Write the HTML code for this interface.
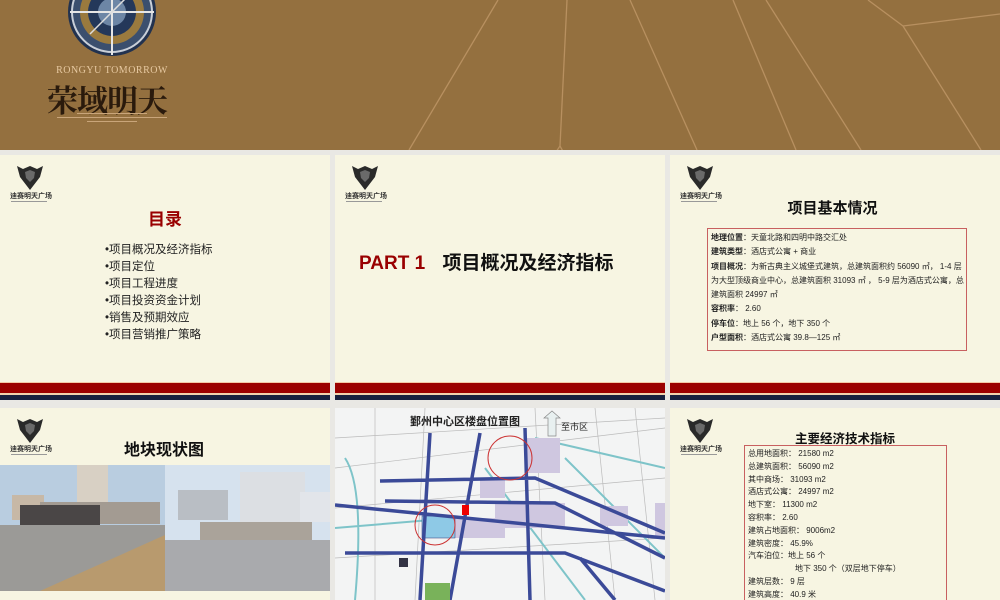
<!DOCTYPE html>
<html><head><meta charset="utf-8">
<style>
*{margin:0;padding:0;box-sizing:border-box}
body{width:1000px;height:600px;overflow:hidden;background:#e9e8e4;position:relative;font-family:"Liberation Sans","Noto Sans CJK SC",sans-serif}
.banner{position:absolute;left:0;top:0;width:1000px;height:150px;background:#94703f;overflow:hidden}
.slide{position:absolute;background:#f7f5e2;overflow:hidden}
.logo{position:absolute;left:16px;top:8px;width:28px;height:28px}
.lt{position:absolute;left:10px;top:36px;font-size:7px;font-weight:bold;color:#333;white-space:nowrap}
.lt2{position:absolute;left:11px;top:46px;width:36px;height:1px;background:#999}
.bars{position:absolute;left:0;width:100%}
.ab{position:absolute}
</style></head><body>

<div class="banner">
<svg width="1000" height="150" style="position:absolute;left:0;top:0">
<g stroke="#b89060" stroke-width="1.3" fill="none">
<line x1="498" y1="0" x2="409" y2="150"/>
<line x1="567" y1="0" x2="560" y2="146"/>
<line x1="560" y1="146" x2="554" y2="155"/>
<line x1="560" y1="146" x2="565" y2="155"/>
<line x1="630" y1="0" x2="697" y2="150"/>
<line x1="733" y1="0" x2="796" y2="150"/>
<line x1="766" y1="0" x2="861" y2="150"/>
<line x1="868" y1="0" x2="903" y2="26"/>
<line x1="903" y1="26" x2="1000" y2="14"/>
<line x1="903" y1="26" x2="981" y2="150"/>
</g>
<circle cx="112" cy="12" r="44" fill="#22324f"/>
<circle cx="112" cy="12" r="40" fill="#3b4f6e" stroke="#c9cfd8" stroke-width="2"/>
<circle cx="112" cy="12" r="32" fill="#9a7a3e"/>
<circle cx="112" cy="12" r="24" fill="#24385a"/>
<circle cx="112" cy="12" r="14" fill="#6d86a6"/>
<line x1="112" y1="-30" x2="112" y2="55" stroke="#e6e6e6" stroke-width="2"/>
<line x1="70" y1="12" x2="154" y2="12" stroke="#e6e6e6" stroke-width="2"/>
<line x1="90" y1="34" x2="134" y2="-10" stroke="#ddd" stroke-width="1.5"/>
</svg>
<div class="ab" style="left:52px;top:65px;width:120px;text-align:center;font-family:'Liberation Serif',serif;font-size:10px;color:#e6c8a0;letter-spacing:0.5px">RONGYU TOMORROW</div>
<div class="ab" style="left:47px;top:76px;font-family:'Liberation Serif','Noto Serif CJK SC',serif;font-size:31px;font-weight:bold;color:#2a1a0c;letter-spacing:-1px">荣域明天</div>
<div class="ab" style="left:52px;top:110px;width:120px;height:14px">
<div style="height:1px;background:#c9a57a;margin:3px 25px"></div><div style="height:1px;background:#c9a57a;margin:3px 5px"></div><div style="height:1px;background:#c9a57a;margin:3px 35px"></div></div>
</div>

<!-- Slide 1 -->
<div class="slide" style="left:0;top:155px;width:330px;height:245px">
<svg class="logo" viewBox="0 0 28 28"><path d="M1 3 L7 6 L14 3 L21 6 L27 3 L24 14 L14 27 L4 14Z" fill="#2a2a2a"/><path d="M9 9 L14 7 L19 9 L18 15 L14 19 L10 15Z" fill="#6a6a6a"/></svg>
<div class="lt">迪赛明天广场</div><div class="lt2"></div>
<div class="ab" style="left:0;top:50px;width:330px;text-align:center;font-size:17px;font-weight:bold;color:#990000">目录</div>
<div class="ab" style="left:105px;top:87px;font-size:11.5px;line-height:17px;color:#222">•项目概况及经济指标<br>•项目定位<br>•项目工程进度<br>•项目投资资金计划<br>•销售及预期效应<br>•项目营销推广策略</div>
<div class="bars" style="top:227px;height:11px;background:#9b0000;border-top:1px solid #f3c9a8"></div>
<div class="bars" style="top:238px;height:3px;background:#f1d2ad"></div>
<div class="bars" style="top:240px;height:5px;background:#17213f"></div>
</div>

<!-- Slide 2 -->
<div class="slide" style="left:335px;top:155px;width:330px;height:245px">
<svg class="logo" viewBox="0 0 28 28"><path d="M1 3 L7 6 L14 3 L21 6 L27 3 L24 14 L14 27 L4 14Z" fill="#2a2a2a"/><path d="M9 9 L14 7 L19 9 L18 15 L14 19 L10 15Z" fill="#6a6a6a"/></svg>
<div class="lt">迪赛明天广场</div><div class="lt2"></div>
<div class="ab" style="left:24px;top:93px;font-size:19px;font-weight:bold;color:#990000;white-space:nowrap">PART 1 <span style="color:#111;margin-left:12px">项目概况及经济指标</span></div>
<div class="bars" style="top:227px;height:11px;background:#9b0000;border-top:1px solid #f3c9a8"></div>
<div class="bars" style="top:238px;height:3px;background:#f1d2ad"></div>
<div class="bars" style="top:240px;height:5px;background:#17213f"></div>
</div>

<!-- Slide 3 -->
<div class="slide" style="left:670px;top:155px;width:330px;height:245px">
<svg class="logo" viewBox="0 0 28 28"><path d="M1 3 L7 6 L14 3 L21 6 L27 3 L24 14 L14 27 L4 14Z" fill="#2a2a2a"/><path d="M9 9 L14 7 L19 9 L18 15 L14 19 L10 15Z" fill="#6a6a6a"/></svg>
<div class="lt">迪赛明天广场</div><div class="lt2"></div>
<div class="ab" style="left:0;top:42px;width:325px;text-align:center;font-size:15px;font-weight:bold;color:#111">项目基本情况</div>
<div class="ab" style="left:37px;top:73px;width:260px;height:123px;border:1.3px solid #c86060;padding:2px 2px 0 3px;font-size:8px;line-height:14.3px;color:#222;overflow:hidden">
<b>地理位置</b>：天童北路和四明中路交汇处<br><b>建筑类型</b>：酒店式公寓 + 商业<br><b>项目概况</b>：为新古典主义城堡式建筑，总建筑面积约 56090 ㎡， 1-4 层为大型顶级商业中心，总建筑面积 31093 ㎡ ， 5-9 层为酒店式公寓，总建筑面积 24997 ㎡<br><b>容积率</b>： 2.60<br><b>停车位</b>：地上 56 个，地下 350 个<br><b>户型面积</b>：酒店式公寓 39.8—125 ㎡</div>
<div class="bars" style="top:227px;height:11px;background:#9b0000;border-top:1px solid #f3c9a8"></div>
<div class="bars" style="top:238px;height:3px;background:#f1d2ad"></div>
<div class="bars" style="top:240px;height:5px;background:#17213f"></div>
</div>

<!-- Slide 4 -->
<div class="slide" style="left:0;top:408px;width:330px;height:192px">
<svg class="logo" viewBox="0 0 28 28"><path d="M1 3 L7 6 L14 3 L21 6 L27 3 L24 14 L14 27 L4 14Z" fill="#2a2a2a"/><path d="M9 9 L14 7 L19 9 L18 15 L14 19 L10 15Z" fill="#6a6a6a"/></svg>
<div class="lt">迪赛明天广场</div><div class="lt2"></div>
<div class="ab" style="left:124px;top:28px;font-size:16px;font-weight:bold;color:#111">地块现状图</div>
<svg class="ab" style="left:0;top:57px" width="330" height="126">
<rect width="165" height="126" fill="#b9cde0"/>
<rect x="77" y="0" width="31" height="40" fill="#d8d0c4"/>
<rect x="12" y="30" width="32" height="25" fill="#c7b8a6"/>
<rect x="40" y="37" width="120" height="22" fill="#a39b92"/>
<rect x="20" y="40" width="80" height="20" fill="#4a4646"/>
<rect x="0" y="60" width="165" height="66" fill="#9b9a97"/>
<polygon points="40,126 165,70 165,126" fill="#b89a6e"/>
<rect x="165" width="165" height="126" fill="#d6e2ee"/>
<rect x="240" y="7" width="65" height="50" fill="#dcdfe3"/>
<rect x="300" y="27" width="30" height="30" fill="#e2e5ea"/>
<rect x="178" y="25" width="50" height="30" fill="#b9bec4"/>
<rect x="200" y="57" width="112" height="22" fill="#aaa39a"/>
<rect x="165" y="75" width="165" height="51" fill="#a9aaad"/>
</svg>
</div>

<!-- Slide 5 map -->
<div class="slide" style="left:335px;top:408px;width:330px;height:192px;background:#f3f4f4">
<svg width="330" height="192">
<g stroke="#bbb" stroke-width="0.7" fill="none">
<path d="M0 60 L330 20 M0 100 L330 70 M0 150 L330 130 M40 0 L40 192 M90 0 L80 192 M200 0 L210 192 M260 0 L280 192 M300 0 L320 192 M0 30 L330 10"/>
</g>
<g stroke="#7ec4c9" stroke-width="2" fill="none">
<path d="M10 50 Q30 80 20 192 M200 30 L330 60 M230 50 L330 150 M150 60 L250 192 M0 120 L120 110"/>
</g>
<g fill="#cfc7e0">
<rect x="145" y="70" width="25" height="20"/><rect x="160" y="95" width="70" height="25"/><rect x="190" y="30" width="35" height="35"/><rect x="120" y="110" width="50" height="20"/><rect x="265" y="98" width="28" height="20"/><rect x="320" y="95" width="10" height="35"/>
</g>
<rect x="87" y="108" width="33" height="22" fill="#8ec9e6" stroke="#337" stroke-width="0.5"/>
<g stroke="#3b4a98" stroke-width="3.5" fill="none">
<path d="M0 97 L330 130 M45 73 L200 70 L330 125 M50 93 L220 95 L330 150 M10 145 L230 145 L330 183 M95 25 L85 192 M145 25 L115 192 M190 20 L195 192 M245 150 L280 192"/>
</g>
<circle cx="175" cy="50" r="22" fill="none" stroke="#c33" stroke-width="1"/>
<circle cx="100" cy="117" r="20" fill="none" stroke="#c33" stroke-width="1"/>
<rect x="127" y="97" width="7" height="10" fill="#e00"/>
<rect x="64" y="150" width="9" height="9" fill="#334"/>
<rect x="90" y="175" width="25" height="17" fill="#79b25a"/>
<text x="75" y="17" font-size="11" font-weight="bold" fill="#222" font-family="Liberation Sans,Noto Sans CJK SC,sans-serif">鄞州中心区楼盘位置图</text>
<path d="M213 28 L213 10 L209 10 L217 3 L225 10 L221 10 L221 28Z" fill="#e8f0f0" stroke="#888" stroke-width="0.7"/>
<text x="226" y="22" font-size="9" fill="#222" font-family="Liberation Sans,Noto Sans CJK SC,sans-serif">至市区</text>
</svg>
</div>

<!-- Slide 6 -->
<div class="slide" style="left:670px;top:408px;width:330px;height:192px">
<svg class="logo" viewBox="0 0 28 28"><path d="M1 3 L7 6 L14 3 L21 6 L27 3 L24 14 L14 27 L4 14Z" fill="#2a2a2a"/><path d="M9 9 L14 7 L19 9 L18 15 L14 19 L10 15Z" fill="#6a6a6a"/></svg>
<div class="lt">迪赛明天广场</div><div class="lt2"></div>
<div class="ab" style="left:125px;top:20px;font-size:12.5px;font-weight:bold;color:#111">主要经济技术指标</div>
<div class="ab" style="left:74px;top:37px;width:203px;height:170px;border:1.2px solid #c86060;padding:2px 0 0 3px;font-size:8px;line-height:12.8px;color:#222">总用地面积： 21580 m2<br>总建筑面积： 56090 m2<br>其中商场： 31093 m2<br>酒店式公寓： 24997 m2<br>地下室： 11300 m2<br>容积率： 2.60<br>建筑占地面积： 9006m2<br>建筑密度： 45.9%<br>汽车泊位：地上 56 个<br><span style="padding-left:47px">地下 350 个（双层地下停车）</span><br>建筑层数： 9 层<br>建筑高度： 40.9 米</div>
</div>

</body></html>
